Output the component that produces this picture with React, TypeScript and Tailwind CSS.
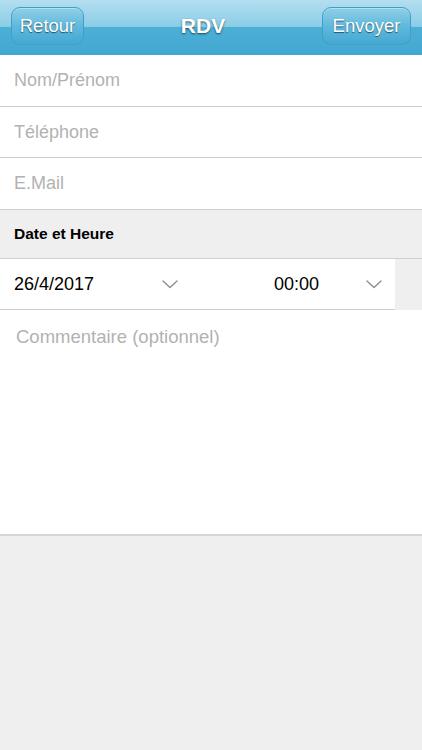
const Chevron = () => (
  <svg width="16" height="9" viewBox="0 0 16 9" fill="none">
    <path d="M1 1l7 6.5L15 1" stroke="#8e8e8e" strokeWidth="1.4" strokeLinecap="round" strokeLinejoin="round" />
  </svg>
);

const NavButton = ({ label, className }: { label: string; className: string }) => (
  <div
    className={`h-[38px] flex items-center justify-center rounded-[9px] border border-[#3f9fc7] bg-gradient-to-b from-[#8fcfe6] via-[#5fb9dd] to-[#44a8d2] shadow-[inset_0_1px_0_rgba(255,255,255,0.35)] text-[18.5px] text-white [text-shadow:0_1px_1px_rgba(0,0,0,0.55)] ${className}`}
  >
    {label}
  </div>
);

const Field = ({ label, h }: { label: string; h: string }) => (
  <div className={`${h} flex items-center px-[14px] border-b border-[#cfcfcf] bg-white text-[18px] text-[#b2b2b2]`}>
    {label}
  </div>
);

export default function App() {
  return (
    <div className="w-[422px] h-[750px] flex flex-col bg-[#efefef] font-['Liberation_Sans',Arial,sans-serif]">
      <div className="h-[55px] shrink-0 flex items-start justify-between px-[11px] pt-[7px] bg-[linear-gradient(to_bottom,#b3def0_0%,#8ccde7_48%,#4cafd6_50%,#43a7d1_100%)]">
        <NavButton label="Retour" className="w-[73px]" />
        <div className="mt-[3px] text-[21px] font-bold text-white [text-shadow:0_1px_2px_rgba(0,0,0,0.6)]">RDV</div>
        <NavButton label="Envoyer" className="w-[89px]" />
      </div>

      <Field label="Nom/Prénom" h="h-[52px]" />
      <Field label="Téléphone" h="h-[51px]" />
      <Field label="E.Mail" h="h-[52px]" />

      <div className="h-[49px] flex items-center px-[14px] bg-[#efefef] border-b border-[#cfcfcf] text-[15.5px] font-bold text-black">
        Date et Heure
      </div>

      <div className="h-[51px] flex">
        <div className="w-[395px] flex items-center bg-white border-b border-[#cfcfcf]">
          <div className="w-[193px] flex items-center justify-between pl-[14px] pr-[15px] text-[18px] text-black">
            <span>26/4/2017</span>
            <Chevron />
          </div>
          <div className="flex-1 flex items-center justify-between pl-[81px] pr-[13px] text-[18px] text-black">
            <span>00:00</span>
            <Chevron />
          </div>
        </div>
        <div className="flex-1 bg-[#efefef]" />
      </div>

      <div className="h-[226px] bg-white border-b-2 border-[#d6d6d6] px-[16px] pt-[13px] text-[18.5px] text-[#b2b2b2]">
        Commentaire (optionnel)
      </div>

      <div className="flex-1 bg-[#efefef]" />
    </div>
  );
}
